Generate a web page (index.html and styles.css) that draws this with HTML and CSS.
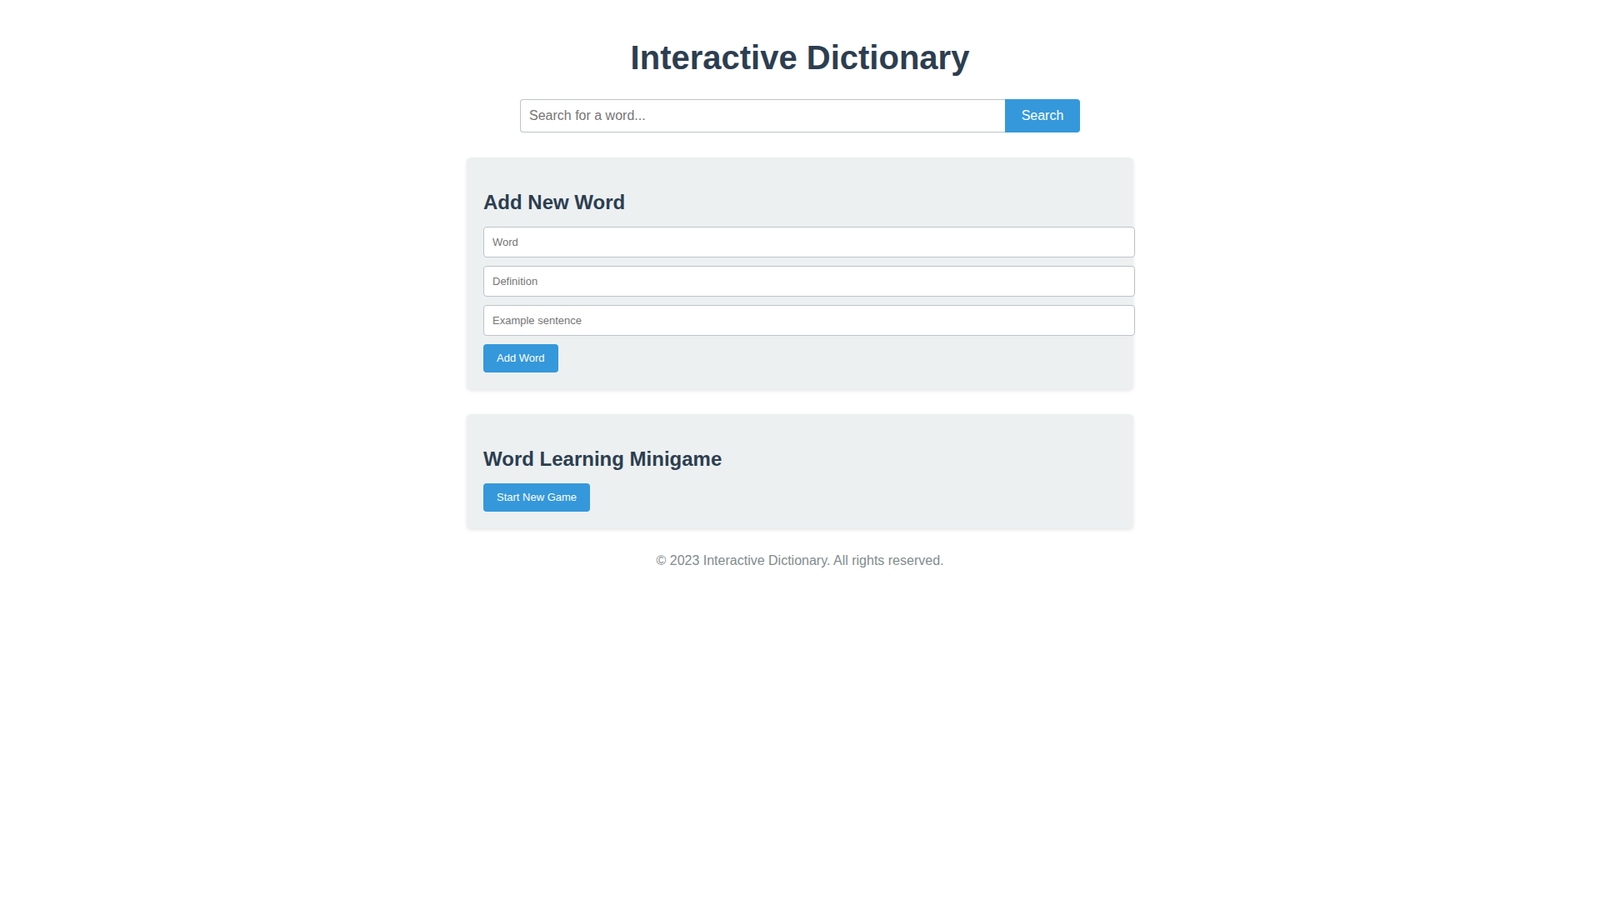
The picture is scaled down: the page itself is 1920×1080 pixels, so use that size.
FILE: index.html
```html
<!DOCTYPE html>
<html lang="en">
<head>
<meta charset="utf-8">
<title>Interactive Dictionary</title>
<link rel="stylesheet" href="styles.css">
</head>
<body>
<div class="container">
  <h1 class="title">Interactive Dictionary</h1>
  <div class="search">
    <input class="search-input" type="text" placeholder="Search for a word...">
    <button class="search-btn">Search</button>
  </div>
  <section class="card">
    <h2 class="card-title">Add New Word</h2>
    <input class="field" type="text" placeholder="Word">
    <input class="field" type="text" placeholder="Definition">
    <input class="field" type="text" placeholder="Example sentence">
    <button class="btn">Add Word</button>
  </section>
  <section class="card">
    <h2 class="card-title">Word Learning Minigame</h2>
    <button class="btn">Start New Game</button>
  </section>
  <footer class="footer">&copy; 2023 Interactive Dictionary. All rights reserved.</footer>
</div>
</body>
</html>
```
FILE: styles.css
```css
html, body {
  margin: 0;
  padding: 0;
  background: #ffffff;
}
body {
  font-family: "Liberation Sans", Arial, sans-serif;
  color: #2c3e50;
}
.container {
  width: 800px;
  margin: 0 auto;
  padding: 20px 0;
}
.title {
  font-size: 40px;
  line-height: 46px;
  font-weight: bold;
  text-align: center;
  color: #2c3e50;
  margin: 26px 0 27px;
}
.search {
  display: flex;
  justify-content: center;
  margin-bottom: 30px;
}
.search-input {
  box-sizing: border-box;
  width: 582px;
  height: 40px;
  padding: 10px;
  font-family: "Liberation Sans", Arial, sans-serif;
  font-size: 16px;
  color: #2c3e50;
  border: 1px solid #bdc3c7;
  border-right: none;
  border-radius: 4px 0 0 4px;
  outline: none;
}
.search-input::placeholder { color: #757575; }
.search-btn {
  box-sizing: border-box;
  width: 90px;
  height: 40px;
  padding: 10px 0;
  font-family: "Liberation Sans", Arial, sans-serif;
  font-size: 16px;
  color: #ffffff;
  background: #3498db;
  border: none;
  border-radius: 0 4px 4px 0;
}
.card {
  background: #ecf0f1;
  padding: 20px;
  border-radius: 5px;
  box-shadow: 0 2px 4px rgba(0, 0, 0, 0.1);
  margin-bottom: 30px;
}
.card-title {
  font-size: 24px;
  font-weight: bold;
  color: #2c3e50;
  margin: 20px 0 15px;
}
.field {
  display: block;
  width: 100%;
  padding: 10px;
  margin: 0 0 10px;
  font-family: "Liberation Sans", Arial, sans-serif;
  font-size: 13px;
  line-height: 15px;
  color: #2c3e50;
  background: #ffffff;
  border: 1px solid #bdc3c7;
  border-radius: 4px;
  outline: none;
}
.field::placeholder { color: #757575; }
.btn {
  display: block;
  padding: 10px 16px;
  font-family: "Liberation Sans", Arial, sans-serif;
  font-size: 13px;
  line-height: 14px;
  color: #ffffff;
  background: #3498db;
  border: none;
  border-radius: 4px;
}
.footer {
  text-align: center;
  color: #7f8c8d;
  font-size: 16px;
}
```
